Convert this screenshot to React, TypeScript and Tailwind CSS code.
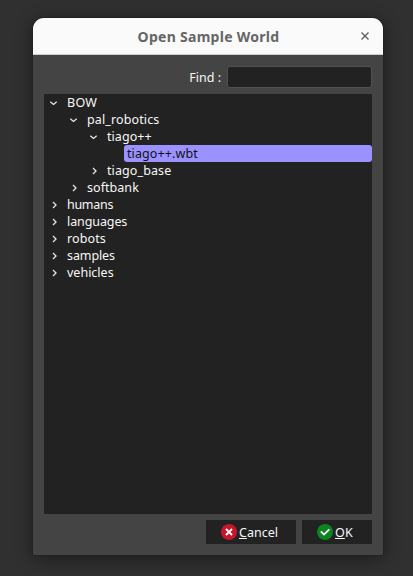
import React from 'react';

type Row = { label: string; indent: string; state: 'open' | 'closed' | 'leaf'; tracking: string };

const rows: Row[] = [
  { label: 'BOW', indent: 'pl-[5px]', state: 'open', tracking: 'tracking-[0.3px]' },
  { label: 'pal_robotics', indent: 'pl-[25px]', state: 'open', tracking: 'tracking-[0.12px]' },
  { label: 'tiago++', indent: 'pl-[45px]', state: 'open', tracking: 'tracking-[0.05px]' },
  { label: 'tiago++.wbt', indent: 'pl-[80px]', state: 'leaf', tracking: 'tracking-[0.1px]' },
  { label: 'tiago_base', indent: 'pl-[45px]', state: 'closed', tracking: 'tracking-[0.1px]' },
  { label: 'softbank', indent: 'pl-[25px]', state: 'closed', tracking: 'tracking-[0.05px]' },
  { label: 'humans', indent: 'pl-[5px]', state: 'closed', tracking: 'tracking-[-0.3px]' },
  { label: 'languages', indent: 'pl-[5px]', state: 'closed', tracking: 'tracking-[-0.1px]' },
  { label: 'robots', indent: 'pl-[5px]', state: 'closed', tracking: 'tracking-[0.1px]' },
  { label: 'samples', indent: 'pl-[5px]', state: 'closed', tracking: 'tracking-[-0.1px]' },
  { label: 'vehicles', indent: 'pl-[5px]', state: 'closed', tracking: 'tracking-[0px]' },
];

function Arrow({ open }: { open: boolean }) {
  return (
    <svg className="mr-[8px] h-[10px] w-[10px] shrink-0" viewBox="0 0 10 10" fill="none" stroke="#e6e6e6" strokeWidth="1.3">
      <path d={open ? 'M1.3 3.7 L4.5 6.5 L7.7 3.7' : 'M4 2 L7 5 L4 8'} />
    </svg>
  );
}

function TreeRow({ row }: { row: Row }) {
  if (row.state === 'leaf') {
    return (
      <div className={`flex h-[17px] ${row.indent}`}>
        <div className="flex h-[17px] flex-1 items-center rounded-[3px] bg-[#9b92ff] pl-[3px] text-[#111]">
          <span className={row.tracking}>{row.label}</span>
        </div>
      </div>
    );
  }
  return (
    <div className={`flex h-[17px] items-center ${row.indent}`}>
      <Arrow open={row.state === 'open'} />
      <span className={row.tracking}>{row.label}</span>
    </div>
  );
}

export default function App() {
  return (
    <div className="h-[576px] w-[413px] overflow-hidden border-b border-[#382c34] bg-[#303030] pt-[18px] pl-[33px] font-['Noto_Sans',sans-serif] text-[12.5px] leading-[17px] text-[#f7f7f7]">
      <div className="flex h-[537px] w-[350px] flex-col overflow-hidden rounded-t-[11px] bg-[#444] shadow-[0_0_0_1px_#222,0_3px_18px_rgba(0,0,0,0.45)]">
        <div className="flex h-[37px] shrink-0 items-center border-b border-[#cfcfcf] bg-[#fafafa]">
          <h1 className="flex-1 pl-[23px] text-center text-[14px] font-bold text-[#666]">
            <span className="tracking-[0.28px]">Open Sample World</span>
          </h1>
          <svg className="mr-[14px] h-[8px] w-[8px]" viewBox="0 0 8 8" stroke="#606060" strokeWidth="1.4">
            <path d="M.5 .5 L7.5 7.5 M7.5 .5 L.5 7.5" />
          </svg>
        </div>
        <div className="flex flex-1 flex-col px-[11px] pt-[11px] pb-[11px]">
          <div className="flex h-[22px] items-center justify-end">
            <label htmlFor="find" className="mr-[6px]">Find :</label>
            <input id="find" className="h-[22px] w-[145px] rounded-[3px] border border-[#505050] bg-[#222] px-1 outline-none" />
          </div>
          <div className="mt-[6px] h-[420px] bg-[#222]">
            {rows.map((row) => (
              <TreeRow key={row.label} row={row} />
            ))}
          </div>
          <div className="mt-[6px] flex justify-end gap-[6px]">
            <button className="flex h-[24px] w-[90px] items-center bg-[#222] pl-[15px]">
              <svg className="mr-[2px] h-[16px] w-[16px]" viewBox="0 0 16 16" fill="none">
                <circle cx="8" cy="8" r="8" fill="#c7162b" />
                <path d="M5 5 L11 11 M11 5 L5 11" stroke="#fff" strokeWidth="1.8" />
              </svg>
              <span><span className="underline decoration-1 underline-offset-[1px] [text-decoration-skip-ink:none]">C</span>ancel</span>
            </button>
            <button className="flex h-[24px] w-[70px] items-center bg-[#222] pl-[15px]">
              <svg className="mr-[2px] h-[16px] w-[16px]" viewBox="0 0 16 16" fill="none">
                <circle cx="8" cy="8" r="8" fill="#0e8420" />
                <path d="M3.8 7.4 L7 10.6 L12.3 5.3" stroke="#fff" strokeWidth="1.7" />
              </svg>
              <span className="tracking-[0.1px]"><span className="underline decoration-1 underline-offset-[1px] [text-decoration-skip-ink:none]">O</span>K</span>
            </button>
          </div>
        </div>
      </div>
    </div>
  );
}
